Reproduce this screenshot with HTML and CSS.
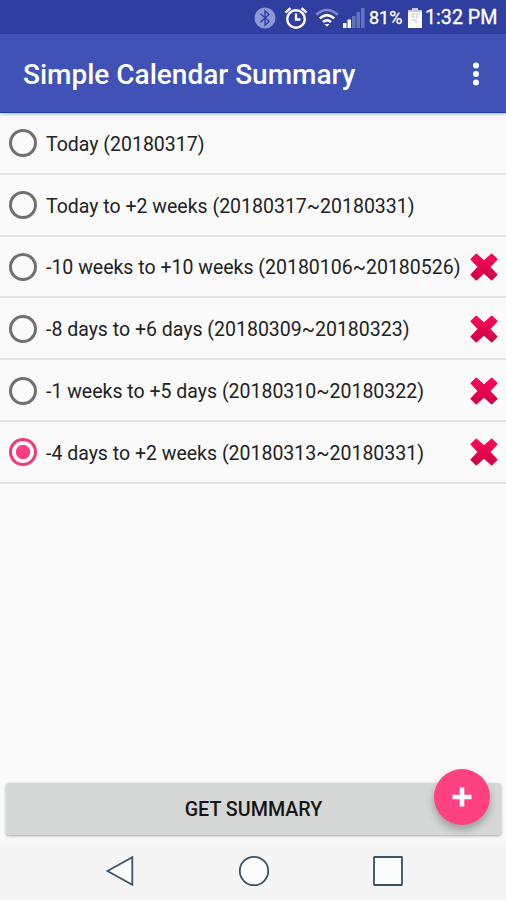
FILE: index.html
```html
<!DOCTYPE html>
<html lang="en">
<head>
<meta charset="utf-8">
<title>Simple Calendar Summary</title>
<link rel="stylesheet" href="styles.css">
</head>
<body>
<svg class="defs" width="0" height="0" aria-hidden="true">
  <defs>
    <linearGradient id="red" x1="0" y1="0" x2="0" y2="1"><stop offset="0" stop-color="#fa0a58"/><stop offset="1" stop-color="#cf0048"/></linearGradient>
    <symbol id="cross" viewBox="0 0 28 28"><path fill="url(#red)" stroke="url(#red)" stroke-width="1.500" stroke-linejoin="round" d="M6.300 1.200 14 8.300 21.700 1.200 26.800 6.300 19.500 14 26.800 21.700 21.700 26.800 14 19.700 6.300 26.800 1.200 21.700 8.500 14 1.200 6.300Z"/></symbol>
  </defs>
</svg>
<div class="screen">
  <header class="status">
    <svg class="bt" width="22" height="22" viewBox="0 0 22 22"><circle cx="11" cy="11" r="10.500" fill="#8d99d6"/><path d="M6.500 6.800 15 14.600 11 18.200V3.800L15 7.400 6.500 15.200" fill="none" stroke="#303f9f" stroke-width="1.400"/></svg>
    <svg class="alarm" width="24" height="24" viewBox="0 0 24 24" fill="none" stroke="#fff" stroke-width="2.400"><circle cx="12" cy="13" r="8.800"/><path d="M12 7.500V13.500H16.500"/><path d="M1.500 6.500 6.500 2.200M22.500 6.500 17.500 2.200"/></svg>
    <svg class="wifi" width="24" height="20" viewBox="0 0 24 20" fill="none" stroke="#fff" stroke-width="2.600"><path d="M1.200 6.800Q12-2.800 22.800 6.800" stroke="#7f8bce"/><path d="M4.800 10.400Q12 4 19.200 10.400"/><path d="M8 14Q12 10.600 16 14"/><path d="M9.500 16H14.500L12 18.800Z" fill="#fff" stroke="none"/></svg>
    <svg class="signal" width="22" height="20" viewBox="0 0 22 20"><path fill="#fff" d="M0 15H3.500V20H0ZM4.500 11.500H8V20H4.500Z"/><path fill="#6572bf" d="M9 8H12.500V20H9ZM13.500 4H17V20H13.500ZM18 0H21.500V20H18Z"/></svg>
    <span class="percent">81%</span>
    <svg class="battery" width="14" height="20" viewBox="0 0 14 20"><path fill="#c3c9e9" d="M4 0H10V2H14V5H0V2H4Z"/><path fill="#fff" d="M0 4H14V20H0Z"/><path d="M4 6H7M4 6V9H7M9 6H12M9 6V11M4 12H8V15" fill="none" stroke="#bfc2cf"/></svg>
    <span class="time">1:32 PM</span>
  </header>
  <div class="appbar">
    <h1>Simple Calendar Summary</h1>
    <svg class="more" width="8" height="24" viewBox="0 0 8 24" fill="#fff"><circle cx="4" cy="3.500" r="3"/><circle cx="4" cy="12" r="3"/><circle cx="4" cy="20.500" r="3"/></svg>
  </div>
  <main class="list">
    <div class="row"><i class="radio"></i><span class="label">Today (20180317)</span></div>
    <div class="row"><i class="radio"></i><span class="label">Today to +2 weeks (20180317~20180331)</span></div>
    <div class="row"><i class="radio"></i><span class="label">-10 weeks to +10 weeks (20180106~20180526)</span><svg class="x"><use href="#cross"/></svg></div>
    <div class="row"><i class="radio"></i><span class="label">-8 days to +6 days (20180309~20180323)</span><svg class="x"><use href="#cross"/></svg></div>
    <div class="row"><i class="radio"></i><span class="label">-1 weeks to +5 days (20180310~20180322)</span><svg class="x"><use href="#cross"/></svg></div>
    <div class="row"><i class="radio on"></i><span class="label">-4 days to +2 weeks (20180313~20180331)</span><svg class="x"><use href="#cross"/></svg></div>
  </main>
  <div class="actions">
    <button class="get">GET SUMMARY</button>
    <button class="fab" aria-label="Add"><svg width="20" height="20" viewBox="0 0 20 20"><path d="M10 .5V19.500M.5 10H19.500" stroke="#fff" stroke-width="4.600"/></svg></button>
  </div>
  <nav class="nav">
    <svg width="32" height="32" viewBox="0 0 32 32"><path d="M3.500 16 28.300 2.200V29.800Z"/></svg>
    <svg width="32" height="32" viewBox="0 0 32 32"><circle cx="16" cy="16" r="14.200"/></svg>
    <svg width="32" height="32" viewBox="0 0 32 32"><rect x="2" y="2" width="28" height="28" rx=".5"/></svg>
  </nav>
</div>
</body>
</html>
```
FILE: styles.css
```css
* { box-sizing: border-box; }
body { margin: 0; font-family: Roboto, sans-serif; }
.defs { position: absolute; }
svg { display: block; flex: none; }
.screen { width: 506px; height: 900px; display: flex; flex-direction: column; background: #fafafa; overflow: hidden; }
.status { height: 34px; flex: none; background: #303f9f; display: flex; align-items: center; padding: 1px 0 0 254px; color: #fff; white-space: nowrap; }
.alarm { margin-left: 8px; }
.wifi { margin-left: 7px; }
.signal { margin-left: 4px; }
.percent { width: 34px; margin-left: 4px; font-size: 18px; -webkit-text-stroke: .3px #fff; }
.battery { margin-left: 5px; }
.time { margin-left: 3px; font-size: 19.700px; -webkit-text-stroke: .3px #fff; }
.appbar { height: 79px; flex: none; background: #4052b5; border-bottom: 1px solid #1f3ca8; display: flex; align-items: center; justify-content: space-between; padding: 2px 26px 0 23px; box-shadow: 0 1px 3px rgba(0,0,0,.3); }
h1 { margin: 2px 0 0; font-size: 28px; font-weight: 500; line-height: 32px; color: #fff; white-space: nowrap; }
.list { flex: 1; }
.row { height: 61.8px; border-bottom: 2px solid #e5e5e5; display: flex; align-items: center; padding: 1px 8px 0 9px; }
.radio { flex: none; width: 28px; height: 28px; border: 3px solid #707070; border-radius: 50%; }
.on { border: 3px solid #f23a79; background: radial-gradient(circle, #ff3d7f 0 6.800px, transparent 7.500px); }
.label { margin-left: 9px; padding-top: 2px; font-size: 19.500px; color: #222; white-space: nowrap; }
.x { width: 28px; height: 28px; margin-left: auto; }
.actions { position: relative; flex: none; height: 60px; padding: 1px 5px 0 6px; }
.get { display: block; width: 100%; height: 52px; border: 0; border-radius: 3px; background: #d6d8d7; box-shadow: 0 1px 3px rgba(0,0,0,.35); font: 500 19.700px Roboto, sans-serif; color: #161616; padding: 0; }
.fab { position: absolute; right: 16px; top: -13px; width: 56px; height: 56px; border: 0; border-radius: 50%; background: #ff4081; display: grid; place-items: center; padding: 0; box-shadow: 0 5px 8px rgba(0,0,0,.28); }
.nav { height: 58px; flex: none; background: #f5f5f5; display: flex; justify-content: center; align-items: center; gap: 102px; padding-left: 1px; fill: #fbfdfd; stroke: #3d5361; stroke-width: 1.800; }
```
